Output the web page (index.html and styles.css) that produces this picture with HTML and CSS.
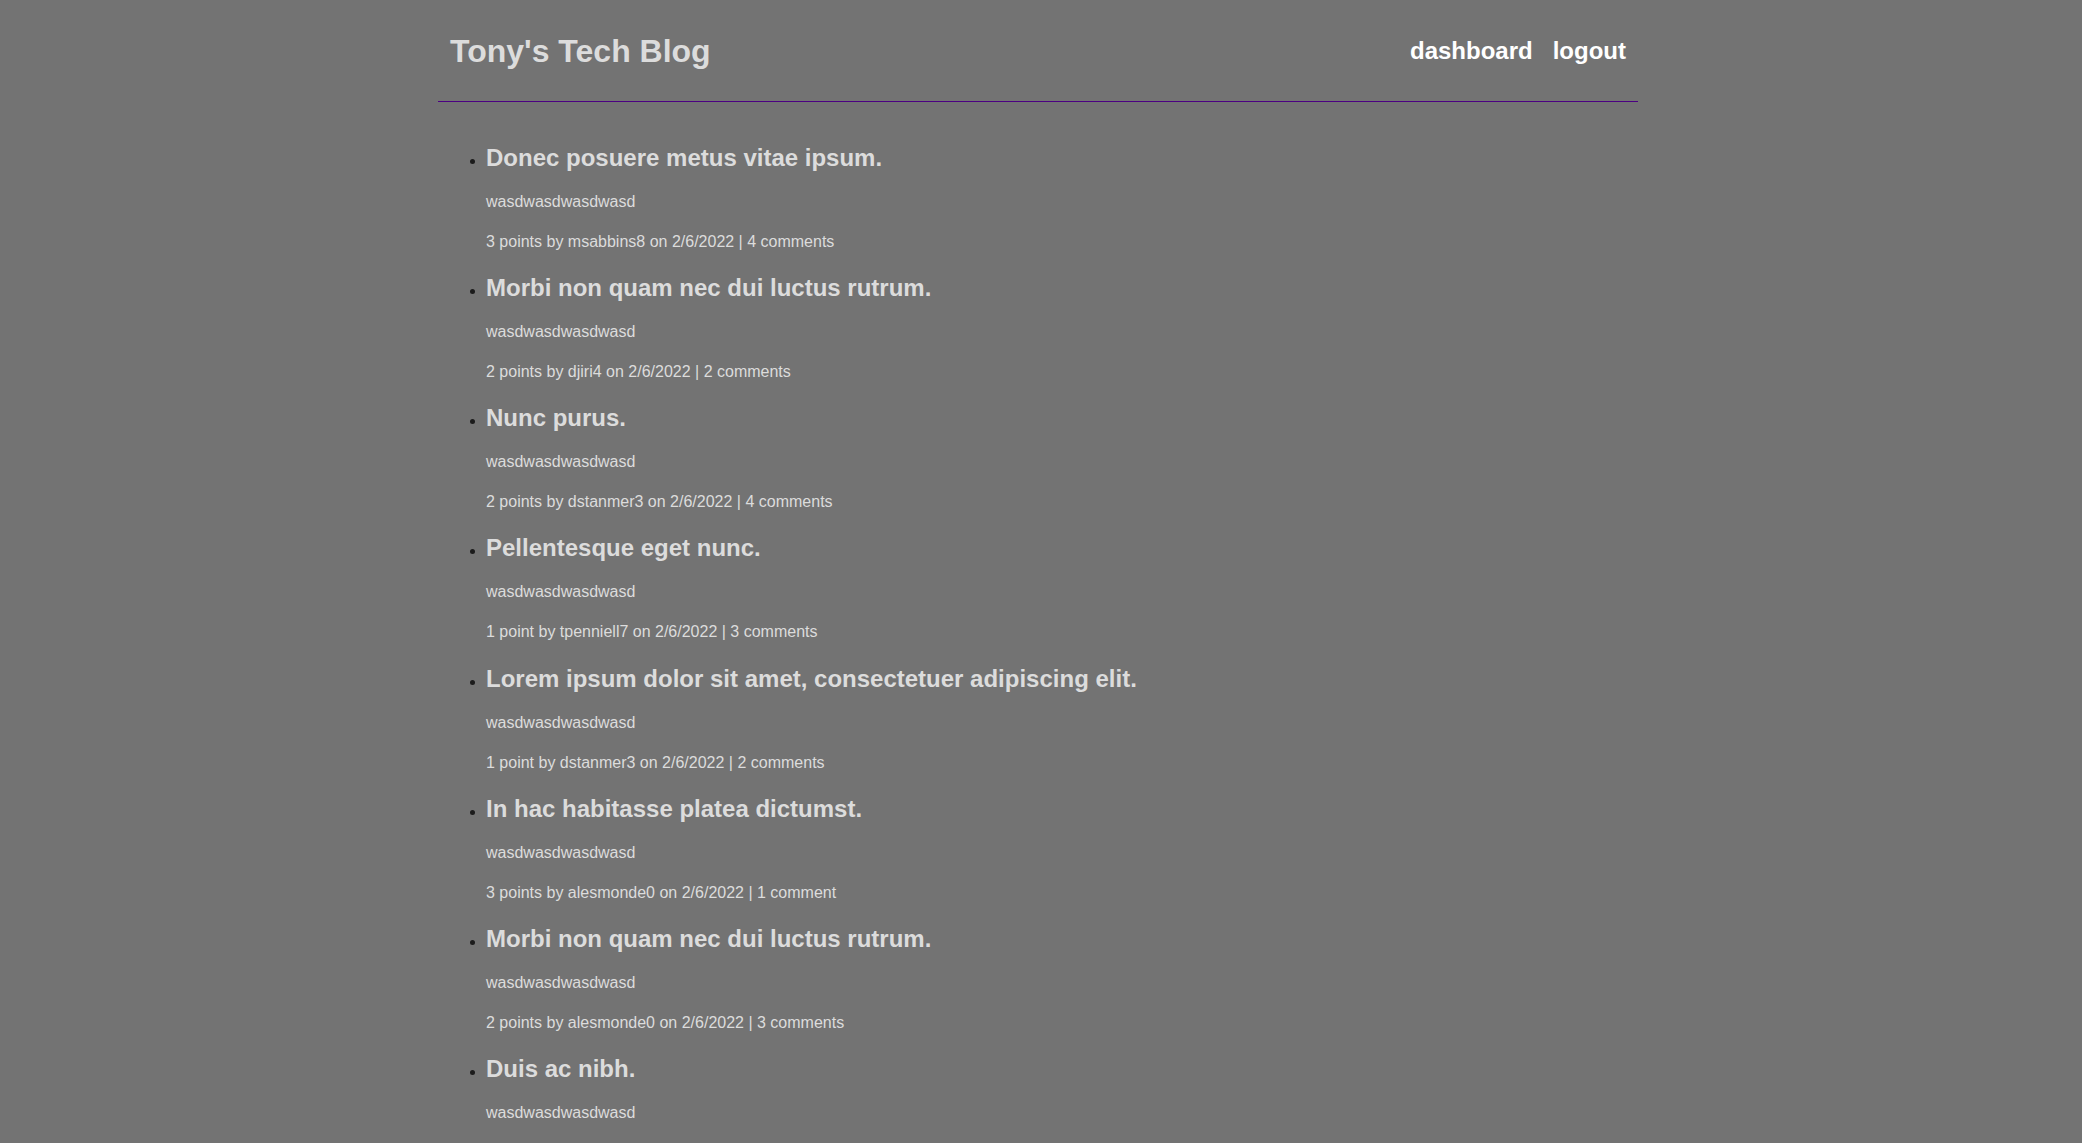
FILE: index.html
```html
<!DOCTYPE html>
<html lang="en">
<head>
<meta charset="utf-8">
<title>Tony's Tech Blog</title>
<link rel="stylesheet" href="styles.css">
</head>
<body>
<div class="container">
  <header class="site-header">
    <h1 class="site-title">Tony's Tech Blog</h1>
    <nav class="site-nav">
      <a class="nav-link" href="#">dashboard</a>
      <a class="nav-link" href="#">logout</a>
    </nav>
  </header>
  <ul class="post-list">
    <li class="post">
      <h2 class="post-title">Donec posuere metus vitae ipsum.</h2>
      <p class="post-body">wasdwasdwasdwasd</p>
      <p class="post-meta">3 points by msabbins8 on 2/6/2022 | 4 comments</p>
    </li>
    <li class="post">
      <h2 class="post-title">Morbi non quam nec dui luctus rutrum.</h2>
      <p class="post-body">wasdwasdwasdwasd</p>
      <p class="post-meta">2 points by djiri4 on 2/6/2022 | 2 comments</p>
    </li>
    <li class="post">
      <h2 class="post-title">Nunc purus.</h2>
      <p class="post-body">wasdwasdwasdwasd</p>
      <p class="post-meta">2 points by dstanmer3 on 2/6/2022 | 4 comments</p>
    </li>
    <li class="post">
      <h2 class="post-title">Pellentesque eget nunc.</h2>
      <p class="post-body">wasdwasdwasdwasd</p>
      <p class="post-meta">1 point by tpenniell7 on 2/6/2022 | 3 comments</p>
    </li>
    <li class="post">
      <h2 class="post-title">Lorem ipsum dolor sit amet, consectetuer adipiscing elit.</h2>
      <p class="post-body">wasdwasdwasdwasd</p>
      <p class="post-meta">1 point by dstanmer3 on 2/6/2022 | 2 comments</p>
    </li>
    <li class="post">
      <h2 class="post-title">In hac habitasse platea dictumst.</h2>
      <p class="post-body">wasdwasdwasdwasd</p>
      <p class="post-meta">3 points by alesmonde0 on 2/6/2022 | 1 comment</p>
    </li>
    <li class="post">
      <h2 class="post-title">Morbi non quam nec dui luctus rutrum.</h2>
      <p class="post-body">wasdwasdwasdwasd</p>
      <p class="post-meta">2 points by alesmonde0 on 2/6/2022 | 3 comments</p>
    </li>
    <li class="post">
      <h2 class="post-title">Duis ac nibh.</h2>
      <p class="post-body">wasdwasdwasdwasd</p>
    </li>
  </ul>
</div>
</body>
</html>
```
FILE: styles.css
```css
html, body {
  margin: 0;
  padding: 0;
  background: #737373;
}

body {
  font-family: "Liberation Sans", Arial, Helvetica, sans-serif;
  padding-right: 6px;
}

.container {
  width: 1200px;
  margin: 0 auto;
}

.site-header {
  display: flex;
  justify-content: space-between;
  align-items: flex-start;
  padding: 31px 12px 30px 12px;
  border-bottom: 1px solid #4b0082;
}

.site-title {
  margin: 0;
  font-size: 32px;
  line-height: 40px;
  font-weight: bold;
  color: #dcdcdc;
}

.site-nav {
  display: flex;
  gap: 20px;
  padding-top: 5px;
}

.nav-link {
  font-size: 24px;
  line-height: 30px;
  font-weight: bold;
  color: #ffffff;
  text-decoration: none;
}

.post-list {
  margin: 42px 0 0 0;
  padding-left: 48px;
}

.post {
  font-size: 16px;
  color: #1c1c1c;
  margin-bottom: 22.15px;
}

.post-title {
  margin: 0 0 20px 0;
  font-size: 24px;
  line-height: 28px;
  font-weight: bold;
  color: #dcdcdc;
}

.post-body,
.post-meta {
  margin: 0 0 20px 0;
  font-size: 16px;
  line-height: 20px;
  color: #dcdcdc;
}
```
